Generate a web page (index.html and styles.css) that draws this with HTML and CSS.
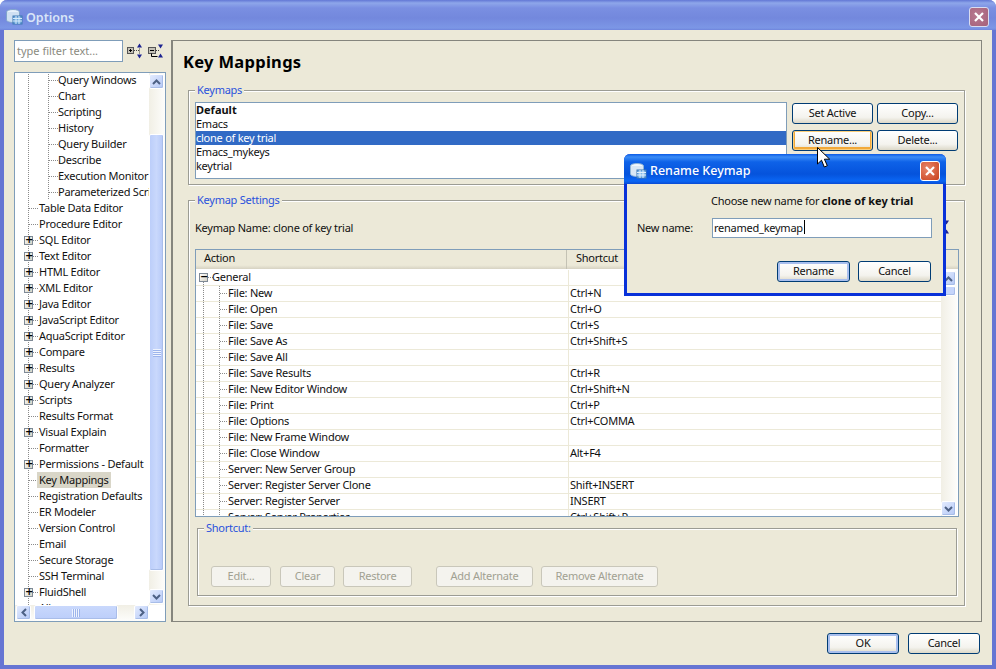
FILE: index.html
```html
<!DOCTYPE html>
<html lang="en">
<head>
<meta charset="utf-8">
<title>Options</title>
<link rel="stylesheet" href="styles.css">
</head>
<body>
<div class="window">
  <header class="titlebar">
    <svg class="app-icon" width="18" height="18" viewBox="0 0 18 18"><ellipse cx="8" cy="4" rx="6.5" ry="2.5" fill="#e8f2fb" stroke="#7fa4cc"/><path d="M1.5 4v8c0 1.4 3 2.5 6.5 2.5s6.500-1.100 6.500-2.500V4" fill="#cfe0f2" stroke="#7fa4cc"/><rect x="8" y="8" width="9" height="8" fill="#6fa8dc" stroke="#3f78b4"/><path d="M8 10.500h9M8 13h9M11 8v8M14 8v8" stroke="#d8ecfb"/></svg>
    <span class="title-text">Options</span>
    <button class="close-btn"><svg width="12" height="12" viewBox="0 0 12 12"><path d="M2 2l8 8M10 2l-8 8" stroke="#fff" stroke-width="2.200"/></svg></button>
  </header>
  <div class="content">
    <div class="columns">
      <aside class="sidebar">
        <div class="filter-row">
          <div class="filter-input">type filter text...</div>
          <svg class="tool-a" width="17" height="16" viewBox="0 0 17 16"><rect x="0.500" y="4.500" width="6" height="6" fill="#c4c1b6" stroke="#555"/><path d="M2 7.500h3M3.500 6v3" stroke="#000"/><path d="M7 7.500h5M12.500 5.500v5" stroke="#444" stroke-dasharray="1 1"/><path d="M12.500 0.500l-2.500 4h5zM12.500 15.500l-2.500-4h5z" fill="#1c2390"/></svg>
          <svg class="tool-b" width="17" height="16" viewBox="0 0 17 16"><rect x="0.500" y="4.500" width="7" height="6" fill="#c4c1b6" stroke="#555"/><path d="M2 7.500h4" stroke="#000"/><path d="M3.500 10.500v3h6" stroke="#000" fill="none"/><path d="M8 7.500h4" stroke="#444" stroke-dasharray="1 1"/><path d="M12.500 5.500l-2.500-4h5zM12.500 10.500l-2.500 4h5z" fill="#1c2390"/></svg>
        </div>
        <div class="tree">
          <div class="tree-list">
            <div class="node lv2">Query Windows</div>
            <div class="node lv2">Chart</div>
            <div class="node lv2">Scripting</div>
            <div class="node lv2">History</div>
            <div class="node lv2">Query Builder</div>
            <div class="node lv2">Describe</div>
            <div class="node lv2">Execution Monitor</div>
            <div class="node lv2">Parameterized Scripts</div>
            <div class="node lv1">Table Data Editor</div>
            <div class="node lv1">Procedure Editor</div>
            <div class="node lv1 plus"><i class="box">+</i>SQL Editor</div>
            <div class="node lv1 plus"><i class="box">+</i>Text Editor</div>
            <div class="node lv1 plus"><i class="box">+</i>HTML Editor</div>
            <div class="node lv1 plus"><i class="box">+</i>XML Editor</div>
            <div class="node lv1 plus"><i class="box">+</i>Java Editor</div>
            <div class="node lv1 plus"><i class="box">+</i>JavaScript Editor</div>
            <div class="node lv1 plus"><i class="box">+</i>AquaScript Editor</div>
            <div class="node lv1 plus"><i class="box">+</i>Compare</div>
            <div class="node lv1 plus"><i class="box">+</i>Results</div>
            <div class="node lv1 plus"><i class="box">+</i>Query Analyzer</div>
            <div class="node lv1 plus"><i class="box">+</i>Scripts</div>
            <div class="node lv1">Results Format</div>
            <div class="node lv1 plus"><i class="box">+</i>Visual Explain</div>
            <div class="node lv1">Formatter</div>
            <div class="node lv1 plus"><i class="box">+</i>Permissions - Default</div>
            <div class="node lv1"><span class="selected">Key Mappings</span></div>
            <div class="node lv1">Registration Defaults</div>
            <div class="node lv1">ER Modeler</div>
            <div class="node lv1">Version Control</div>
            <div class="node lv1">Email</div>
            <div class="node lv1">Secure Storage</div>
            <div class="node lv1">SSH Terminal</div>
            <div class="node lv1 plus"><i class="box">+</i>FluidShell</div>
            <div class="node lv1">Aliases</div>
          </div>
          <div class="vbar tree-vbar">
            <div class="sb-btn"><svg width="9" height="6" viewBox="0 0 9 6"><path d="M1 5l3.500-3.500L8 5" fill="none" stroke="#4d6185" stroke-width="2"/></svg></div>
            <div class="sb-space small"></div>
            <div class="sb-thumb tree-thumb"><span class="grip-h"></span></div>
            <div class="sb-space"></div>
            <div class="sb-btn"><svg width="9" height="6" viewBox="0 0 9 6"><path d="M1 1l3.500 3.500L8 1" fill="none" stroke="#4d6185" stroke-width="2"/></svg></div>
          </div>
          <div class="hbar">
            <div class="sb-btn"><svg width="6" height="9" viewBox="0 0 6 9"><path d="M5 1L1.500 4.500 5 8" fill="none" stroke="#4d6185" stroke-width="2"/></svg></div>
            <div class="sb-thumb h-thumb"><span class="grip-v"></span></div>
            <div class="sb-space"></div>
            <div class="sb-btn"><svg width="6" height="9" viewBox="0 0 6 9"><path d="M1 1l3.500 3.500L1 8" fill="none" stroke="#4d6185" stroke-width="2"/></svg></div>
          </div>
          <div class="corner"></div>
        </div>
      </aside>
      <main class="panel">
        <h1 class="heading">Key Mappings</h1>
        <section class="group keymaps">
          <div class="group-title">Keymaps</div>
          <div class="keymaps-row">
            <ul class="keymap-list">
              <li class="bold">Default</li>
              <li>Emacs</li>
              <li class="active">clone of key trial</li>
              <li>Emacs_mykeys</li>
              <li>keytrial</li>
            </ul>
            <div class="keymap-actions">
              <button class="btn">Set Active</button>
              <button class="btn">Copy...</button>
              <button class="btn hover">Rename...</button>
              <button class="btn">Delete...</button>
            </div>
          </div>
        </section>
        <section class="group settings">
          <div class="group-title">Keymap Settings</div>
          <div class="name-row">
            <span>Keymap Name: clone of key trial</span>
            <svg class="name-tool" width="17" height="16" viewBox="0 0 17 16"><rect x="0.500" y="4.500" width="7" height="6" fill="#c4c1b6" stroke="#555"/><path d="M3.500 10.500v3h6" stroke="#000" fill="none"/><path d="M12.500 5.500l-2.500-4h5zM12.500 10.500l-2.500 4h5z" fill="#1c2390"/></svg>
          </div>
          <div class="table">
            <div class="thead">
              <div class="th th-action">Action</div>
              <div class="th th-shortcut">Shortcut</div>
            </div>
            <div class="tbody">
              <div class="rows">
                <div class="row top"><div class="c1"><i class="box minus">&minus;</i>General</div><div class="c2"></div></div>
                <div class="row"><div class="c1">File: New</div><div class="c2">Ctrl+N</div></div>
                <div class="row"><div class="c1">File: Open</div><div class="c2">Ctrl+O</div></div>
                <div class="row"><div class="c1">File: Save</div><div class="c2">Ctrl+S</div></div>
                <div class="row"><div class="c1">File: Save As</div><div class="c2">Ctrl+Shift+S</div></div>
                <div class="row"><div class="c1">File: Save All</div><div class="c2"></div></div>
                <div class="row"><div class="c1">File: Save Results</div><div class="c2">Ctrl+R</div></div>
                <div class="row"><div class="c1">File: New Editor Window</div><div class="c2">Ctrl+Shift+N</div></div>
                <div class="row"><div class="c1">File: Print</div><div class="c2">Ctrl+P</div></div>
                <div class="row"><div class="c1">File: Options</div><div class="c2">Ctrl+COMMA</div></div>
                <div class="row"><div class="c1">File: New Frame Window</div><div class="c2"></div></div>
                <div class="row"><div class="c1">File: Close Window</div><div class="c2">Alt+F4</div></div>
                <div class="row"><div class="c1">Server: New Server Group</div><div class="c2"></div></div>
                <div class="row"><div class="c1">Server: Register Server Clone</div><div class="c2">Shift+INSERT</div></div>
                <div class="row"><div class="c1">Server: Register Server</div><div class="c2">INSERT</div></div>
                <div class="row"><div class="c1">Server: Server Properties</div><div class="c2">Ctrl+Shift+P</div></div>
              </div>
              <div class="vbar table-vbar">
                <div class="sb-btn"><svg width="9" height="6" viewBox="0 0 9 6"><path d="M1 5l3.500-3.500L8 5" fill="none" stroke="#4d6185" stroke-width="2"/></svg></div>
                <div class="sb-thumb table-thumb"></div>
                <div class="sb-space"></div>
                <div class="sb-btn"><svg width="9" height="6" viewBox="0 0 9 6"><path d="M1 1l3.500 3.500L8 1" fill="none" stroke="#4d6185" stroke-width="2"/></svg></div>
              </div>
            </div>
          </div>
          <section class="group shortcut">
            <div class="group-title">Shortcut:</div>
            <div class="shortcut-buttons">
              <button class="btn off w-edit">Edit...</button>
              <button class="btn off w-clear">Clear</button>
              <button class="btn off w-restore">Restore</button>
              <button class="btn off w-add">Add Alternate</button>
              <button class="btn off w-remove">Remove Alternate</button>
            </div>
          </section>
        </section>
      </main>
    </div>
    <footer class="footer">
      <button class="btn default w-foot">OK</button>
      <button class="btn w-foot">Cancel</button>
    </footer>
  </div>
</div>

<div class="dialog">
  <header class="dialog-title">
    <svg class="dialog-icon" width="18" height="18" viewBox="0 0 18 18"><ellipse cx="8" cy="4" rx="6.500" ry="2.500" fill="#f2f7fc" stroke="#8fb4d8"/><path d="M1.500 4v8c0 1.400 3 2.500 6.500 2.500s6.500-1.100 6.500-2.500V4" fill="#d9e7f5" stroke="#8fb4d8"/><rect x="8" y="8" width="9" height="8" fill="#7fb6ea" stroke="#3f78b4"/><path d="M8 10.500h9M8 13h9M11 8v8M14 8v8" stroke="#e2f1fc"/></svg>
    <span>Rename Keymap</span>
    <button class="close-btn active-close"><svg width="12" height="12" viewBox="0 0 12 12"><path d="M2 2l8 8M10 2l-8 8" stroke="#fff" stroke-width="2.200"/></svg></button>
  </header>
  <div class="dialog-body">
    <p class="dialog-msg">Choose new name for <b>clone of key trial</b></p>
    <div class="dialog-form">
      <label class="dialog-label">New name:</label>
      <div class="dialog-input">renamed_keymap<span class="caret"></span></div>
    </div>
    <div class="dialog-buttons">
      <button class="btn default w-dlg">Rename</button>
      <button class="btn w-dlg">Cancel</button>
    </div>
  </div>
</div>

<svg class="cursor" width="14" height="22" viewBox="0 0 14 22"><path d="M.5.5v16.500l4-3.800 2.800 6.800 3-1.300-2.900-6.500h5.300z" fill="#fff" stroke="#000"/></svg>
</body>
</html>
```
FILE: styles.css
```css
* { box-sizing: border-box; }
html, body { margin: 0; padding: 0; }
body {
  width: 996px; height: 669px; position: relative; overflow: hidden; background: #fff;
  font-family: "Noto Sans", "Open Sans", sans-serif; font-size: 11px; letter-spacing: -.25px; color: #111;
}
button { font: inherit; letter-spacing: inherit; color: inherit; padding: 0; }
ul { list-style: none; margin: 0; padding: 0; }
p, h1 { margin: 0; }
i { font-style: normal; }
b { letter-spacing: 0; }

.window {
  width: 996px; height: 669px; display: flex; flex-direction: column;
  border: 4px solid #6675d3; border-top: 0; border-radius: 7px 7px 0 0;
  background: #ece9d8;
}
.titlebar {
  height: 30px; margin: 0 -4px; padding: 4px 7px 0 5px; flex: none;
  display: flex; align-items: center; border-radius: 7px 7px 0 0;
  background: linear-gradient(#6277d5 0, #8ea6ea 3px, #7a8fe2 8px, #7388dd 18px, #7c97e6 28px, #6f84dc 30px);
}
.app-icon { flex: none; }
.title-text { margin-left: 3px; font-size: 12.500px; font-weight: 600; letter-spacing: 0; color: #d9e5f8; }
.close-btn {
  margin-left: auto; width: 20px; height: 20px; border: 1px solid #d9dcf0; border-radius: 3px;
  background: radial-gradient(circle at 40% 40%, #b87a90, #a5607a);
  display: flex; align-items: center; justify-content: center;
}
.active-close { background: radial-gradient(circle at 35% 35%, #e8866a, #c8401c); border-color: #fff; }

.content { flex: 1; min-height: 0; display: flex; flex-direction: column; padding: 10px 10px 0; }
.columns { height: 582px; display: flex; gap: 4px; }

.sidebar { width: 153px; flex: none; display: flex; flex-direction: column; }
.filter-row { height: 21px; display: flex; align-items: flex-start; margin-bottom: 11px; }
.filter-input {
  width: 109px; height: 22px; border: 1px solid #7f9db9; background: #fff; color: #8a8a80;
  padding-left: 2px; line-height: 19px; letter-spacing: 0;
}
.tool-a { margin: 3px 0 0 4px; }
.tool-b { margin: 3px 0 0 4px; }

.tree {
  flex: 1; min-height: 0; width: 152px; border: 1px solid #7f9db9; background: #fff;
  display: grid; grid-template-columns: 134px 16px; grid-template-rows: 532px 16px; overflow: hidden;
}
.tree-list { overflow: hidden; margin-top: -1px; }
.node {
  height: 16px; line-height: 15px; white-space: nowrap; position: relative;
  background-repeat: no-repeat;
}
.lv1 {
  padding-left: 24px;
  background-image:
    repeating-linear-gradient(to bottom, #8b8b8b 0 1px, transparent 1px 2px),
    repeating-linear-gradient(to right, #8b8b8b 0 1px, transparent 1px 2px);
  background-size: 1px 100%, 10px 1px;
  background-position: 13px 0, 14px 8px;
}
.lv2 {
  padding-left: 43px;
  background-image:
    repeating-linear-gradient(to bottom, #8b8b8b 0 1px, transparent 1px 2px),
    repeating-linear-gradient(to bottom, #8b8b8b 0 1px, transparent 1px 2px),
    repeating-linear-gradient(to right, #8b8b8b 0 1px, transparent 1px 2px);
  background-size: 1px 100%, 1px 100%, 9px 1px;
  background-position: 13px 0, 33px 0, 34px 8px;
}
.box {
  position: absolute; left: 9px; top: 4px; width: 9px; height: 9px;
  border: 1px solid #7f8a96; background: linear-gradient(135deg, #fff, #d6d2c4);
  font-size: 10px; line-height: 6px; text-align: center; font-weight: 700; color: #000;
  font-family: "DejaVu Sans", sans-serif; letter-spacing: 0;
}
.selected { background: #d9d6c8; display: inline-block; padding: 0 2px; margin-left: -2px; height: 16px; }

.vbar { display: flex; flex-direction: column; background: linear-gradient(to right, #f1efe5, #fdfdfb); }
.tree-vbar { padding: 1px 0 1px; grid-column: 2; grid-row: 1; }
.hbar {
  grid-column: 1; grid-row: 2; display: flex; padding-left: 1px;
  background: linear-gradient(to bottom, #f1efe5, #fdfdfb);
}
.corner { background: #fff; }
.sb-btn {
  width: 15px; height: 15px; flex: none; border: 1px solid #fff; border-radius: 2px;
  background: linear-gradient(135deg, #e3ebfe, #b4c8f6);
  box-shadow: inset -1px -1px 0 #a8bde8;
  display: flex; align-items: center; justify-content: center;
}
.sb-space { flex: 1; }
.sb-space.small { flex: 0 0 45px; }
.sb-thumb {
  border: 1px solid #fff; border-radius: 2px; display: flex; align-items: center; justify-content: center;
  box-shadow: inset -1px -1px 0 #a9bde9;
}
.tree-thumb { width: 15px; height: 437px; flex: none; background: linear-gradient(to right, #bccefa, #c9d8fc 50%, #b6c9f8); }
.h-thumb { width: 84px; height: 15px; margin-left: 3px; flex: none; background: linear-gradient(#c9d8fc, #bccefa); }
.table-thumb { width: 15px; height: 10px; flex: none; background: #c5d5fb; }
.grip-h { width: 8px; height: 8px; background: repeating-linear-gradient(to bottom, #eef3fe 0 1px, #9db5ec 1px 2px); }
.grip-v { width: 8px; height: 8px; background: repeating-linear-gradient(to right, #eef3fe 0 1px, #9db5ec 1px 2px); }

.panel {
  flex: 1; min-width: 0; border: 1px solid #85857d; border-left-width: 2px;
  padding: 0 16px 0 15px;
}
.heading {
  height: 49px; margin-left: -5px; padding-top: 10px; line-height: 22px; font-size: 16.500px; font-weight: 700; color: #000;
  letter-spacing: .3px;
}
.group { border: 1px solid #9c9c94; box-shadow: 1px 1px 0 #fff, inset 1px 1px 0 #fff; padding: 0 5px 0 6px; }
.group-title {
  width: fit-content; height: 14px; line-height: 14px; margin: -8px 0 0 0; padding: 0 2px;
  background: #ece9d8; color: #2a52dd;
}
.keymaps { height: 95px; }
.keymaps-row { display: flex; margin-top: 5px; }
.keymap-list { width: 592px; height: 77px; flex: none; border: 1px solid #7f9db9; background: #fff; }
.keymap-list li { height: 14px; line-height: 14px; }
.keymap-list .bold { font-weight: 700; letter-spacing: 0; }
.keymap-list .active { background: #316ac5; color: #fff; }
.keymap-actions {
  margin: 1px 0 0 5px; display: grid; grid-template-columns: 81px 81px; grid-auto-rows: 21px;
  column-gap: 4px; row-gap: 6px;
}
.btn {
  height: 21px; border: 1px solid #003c74; border-radius: 3px; text-align: center; padding-bottom: 2px;
  background: linear-gradient(#fff, #f4f3ee 70%, #dcd8c8);
}
.hover { box-shadow: inset 0 0 0 1px #fbcf7c, inset 0 -1px 0 2px #f2a93a; }
.default { box-shadow: inset 0 0 0 2px #a9bfee; }
.off { border-color: #c9c7ba; background: #f4f3ee; color: #a1a192; }

.settings { margin-top: 15px; height: 406px; }
.name-row { display: flex; align-items: center; justify-content: space-between; height: 20px; margin-top: 11px; padding: 0 8px 2px 0; }
.table { margin-top: 11px; height: 268px; border: 1px solid #7f9db9; overflow: hidden; background: #fff; }
.thead { height: 19px; display: flex; background: linear-gradient(#ece9d8 80%, #d6d2c2); }
.th { line-height: 15px; }
.th-action { width: 371px; padding-left: 8px; border-right: 1px solid #c4c2b4; }
.th-shortcut { padding-left: 9px; }
.tbody { display: flex; height: 248px; padding-top: 1px; }
.rows { flex: 1; min-width: 0; overflow: hidden; }
.row { display: flex; height: 16px; border-bottom: 1px solid #ece9d8; line-height: 14px; }
.c1 {
  width: 373px; flex: none; border-right: 1px solid #ece9d8; padding-left: 32px; position: relative;
  background-repeat: no-repeat;
  background-image:
    repeating-linear-gradient(to bottom, #8b8b8b 0 1px, transparent 1px 2px),
    repeating-linear-gradient(to bottom, #8b8b8b 0 1px, transparent 1px 2px),
    repeating-linear-gradient(to right, #8b8b8b 0 1px, transparent 1px 2px);
  background-size: 1px 100%, 1px 100%, 8px 1px;
  background-position: 7px 0, 23px 0, 24px 7px;
}
.row.top .c1 {
  padding-left: 16px;
  background-image: repeating-linear-gradient(to bottom, #8b8b8b 0 1px, transparent 1px 2px), repeating-linear-gradient(to right, #8b8b8b 0 1px, transparent 1px 2px);
  background-size: 1px 8px, 5px 1px;
  background-position: 7px 8px, 12px 7px;
}
.c1 .box { left: 3px; top: 3px; }
.c2 { padding-left: 1px; }
.table-vbar { width: 16px; flex: none; margin-top: 1px; margin-right: 1px; padding-bottom: 1px; }

.shortcut { margin: 11px 2px 0; height: 68px; padding: 0 0 0 13px; }
.shortcut .group-title { margin-left: -7px; }
.shortcut-buttons { display: flex; gap: 8px; margin-top: 31px; }
.w-edit { width: 60px; margin-right: 1px; }
.w-clear { width: 55px; }
.w-restore { width: 69px; margin-right: 16px; }
.w-add { width: 97px; }
.w-remove { width: 117px; }

.footer { display: flex; justify-content: flex-end; gap: 9px; padding: 11px 2px 0 0; }
.w-foot { width: 72px; }
.w-dlg { width: 73px; }

.dialog {
  position: absolute; left: 624px; top: 154px; width: 322px; height: 142px;
  border: 3px solid #0831d9; border-top: 0; border-radius: 6px 6px 0 0; background: #ece9d8;
  display: flex; flex-direction: column;
}
.dialog-title {
  height: 30px; margin: 0 -3px; padding: 3px 6px 0 5px; flex: none; display: flex; align-items: center;
  border-radius: 6px 6px 0 0; color: #fff; font-size: 12.500px; font-weight: 500; letter-spacing: 0;
  background: linear-gradient(#0a5ae6 0, #3a8cf6 3px, #0e62e8 8px, #0553dc 20px, #0a66f4 27px, #0a4bd4 30px);
}
.dialog-title span { margin-left: 3px; }
.dialog-body { flex: 1; }
.dialog-msg { height: 14px; line-height: 14px; margin: 10px 0 0 84px; }
.dialog-form { display: flex; align-items: center; height: 20px; margin-top: 10px; padding-left: 10px; }
.dialog-label { width: 75px; flex: none; padding-bottom: 2px; }
.dialog-input { width: 220px; height: 20px; border: 1px solid #7f9db9; background: #fff; padding: 0 0 2px 1px; display: flex; align-items: center; }
.caret { width: 1px; height: 14px; background: #000; margin-left: 1px; }
.dialog-buttons { display: flex; justify-content: flex-end; gap: 8px; margin-top: 23px; padding-right: 12px; }

.cursor { position: absolute; left: 817px; top: 147px; }
```
